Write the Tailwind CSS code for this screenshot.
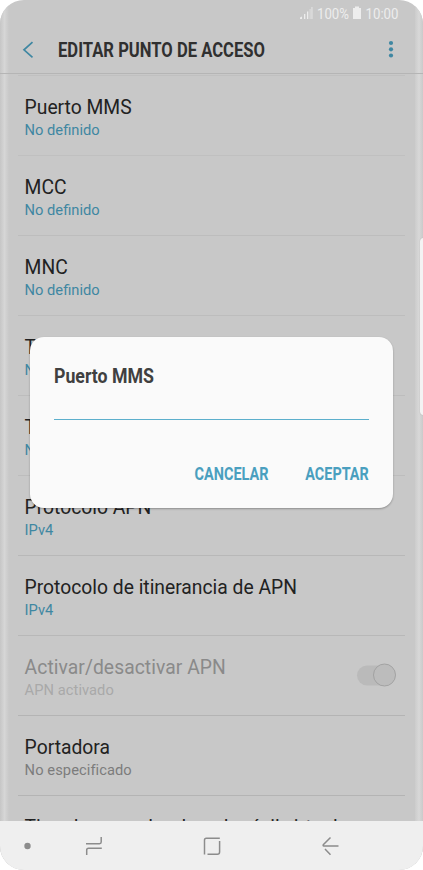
<!DOCTYPE html>
<html lang="es">
<head>
<meta charset="utf-8">
<title>Editar punto de acceso</title>
<script src="https://cdn.jsdelivr.net/npm/@tailwindcss/browser@4"></script>
</head>
<body class="bg-white font-['Roboto',sans-serif]">
<div class="relative flex h-[870px] w-[423px] flex-col overflow-hidden rounded-[24px] bg-[#c8c8c8]">
  <!-- curved screen edges -->
  <div class="absolute inset-y-0 left-0 w-[9px] bg-linear-to-r from-[#c6c6c6] via-[#d6d6d6] to-[#c8c8c8]"></div>
  <div class="absolute inset-y-0 right-0 w-[8px] bg-linear-to-r from-[#cccccc] via-[#d8d8d8] to-[#cacaca]"></div>

  <div class="flex h-[27px] shrink-0 justify-end pr-[22px]">
    <svg class="h-[27px] w-[101px] overflow-visible" viewBox="0 0 101 27" fill="#ededed">
      <path d="M0 19v-1.500l2-1v2.500z"/>
      <path d="M4 14h1.300v5H4zM7 11.500h1.300V19H7z"/>
      <path d="M9.600 9h1v10h-1zM11.300 7h1.300v12h-1.300z" opacity=".65"/>
      <text x="17" y="19" font-size="15.500" textLength="32" lengthAdjust="spacingAndGlyphs">100%</text>
      <path d="M53 8h2V6.500h4V8h2v11h-8z"/>
      <text x="65.500" y="19" font-size="15.500" textLength="33" lengthAdjust="spacingAndGlyphs">10:00</text>
    </svg>
  </div>

  <header class="relative flex h-[47px] shrink-0 items-center border-b border-[#b5b5b5] pl-[22px] pr-[27px]">
    <svg class="h-[20px] w-[12px]" viewBox="0 0 12 20" fill="none" stroke="#3f87a2" stroke-width="1.700"><path d="M10.500 2.200 2 9.800l8.500 7.500"/></svg>
    <svg class="ml-[23px] h-[24px] w-[210px] overflow-visible" viewBox="0 0 210 24"><text x="1" y="19" font-size="19.500" font-weight="700" fill="#303030" textLength="207" lengthAdjust="spacingAndGlyphs">EDITAR PUNTO DE ACCESO</text></svg>
    <svg class="ml-auto h-[20px] w-[10px]" viewBox="0 0 10 20" fill="#3f87a2"><circle cx="5" cy="3" r="2.100"/><circle cx="5" cy="9.300" r="2.100"/><circle cx="5" cy="15.500" r="2.100"/></svg>
  </header>

  <main class="ml-[18px] mr-[18px] h-[747px] shrink-0 overflow-hidden border-t border-transparent text-[19.3px] leading-[24px] text-[#222]">
    <div class="h-[81px] border-y border-[#c0c0c0] pl-[6.600px] pt-[20px]"><p>Puerto MMS</p><p class="text-[14.7px] leading-[20px] text-[#3f87a2]">No definido</p></div>
    <div class="h-[80px] border-b border-[#bdbdbd] pl-[6.600px] pt-[20px]"><p>MCC</p><p class="text-[14.7px] leading-[20px] text-[#3f87a2]">No definido</p></div>
    <div class="h-[80px] border-b border-[#bdbdbd] pl-[6.600px] pt-[20px]"><p>MNC</p><p class="text-[14.7px] leading-[20px] text-[#3f87a2]">No definido</p></div>
    <div class="h-[80px] border-b border-[#bdbdbd] pl-[6.600px] pt-[20px]"><p>Tipo de autenticación</p><p class="text-[14.7px] leading-[20px] text-[#3f87a2]">No definido</p></div>
    <div class="h-[80px] border-b border-[#bdbdbd] pl-[6.600px] pt-[20px]"><p>Tipo de APN</p><p class="text-[14.7px] leading-[20px] text-[#3f87a2]">No definido</p></div>
    <div class="h-[80px] border-b border-[#b8b8b8] pl-[6.600px] pt-[20px]"><p>Protocolo APN</p><p class="text-[14.7px] leading-[20px] text-[#3f87a2]">IPv4</p></div>
    <div class="h-[80px] border-b border-[#b8b8b8] pl-[6.600px] pt-[20px]"><p>Protocolo de itinerancia de APN</p><p class="text-[14.7px] leading-[20px] text-[#3f87a2]">IPv4</p></div>
    <div class="flex h-[80px] justify-between border-b border-[#b4b4b4] pl-[6.600px] pr-[9px] pt-[20px]">
      <div><p class="tracking-[0.06px] text-[#8a8a8a]">Activar/desactivar APN</p><p class="text-[14.7px] leading-[20px] tracking-[0.05px] text-[#a9a9a9]">APN activado</p></div>
      <svg class="mt-[6px] h-[26px] w-[41px]" viewBox="0 0 41 26"><rect x="2" y="3.500" width="38" height="20" rx="10" fill="#bababa"/><circle cx="29.500" cy="13" r="11" fill="#bcbcbc" stroke="#9b9b9b" stroke-width=".8"/></svg>
    </div>
    <div class="h-[80px] border-b border-[#b4b4b4] pl-[6.600px] pt-[20px]"><p>Portadora</p><p class="text-[14.7px] leading-[20px] tracking-[0.07px] text-[#7c7c7c]">No especificado</p></div>
    <div class="whitespace-nowrap pl-[6.600px] pt-[20px]"><p>Tipo de operador de red móvil virtual</p></div>
  </main>

  <nav class="relative h-[49px] shrink-0 bg-[#efefef]">
    <svg class="h-[49px] w-[423px]" viewBox="0 0 423 49" fill="none" stroke="#8c8c8c" stroke-width="1.500">
      <circle cx="27.500" cy="25" r="3.200" fill="#8c8c8c" stroke="none"/>
      <path d="M86 22.700h13.500q1.700 0 1.700-1.700V16M101.800 27.200H88.500q-1.800 0-1.800 1.800v5"/>
      <path d="M204.500 33.500V19q0-1.800 1.800-1.800h13.500M219.600 20V31q0 2.300-2.300 2.300H207.500"/>
      <path d="M338.500 25h-14.500q-1.500-.4-.5-1.500l7-7M325 28l5.500 5.800"/>
    </svg>
  </nav>

  <!-- edge panel handle -->
  <div class="absolute right-[-4px] top-[238px] h-[177px] w-[7px] rounded-[4px] bg-[#f3f3f3] shadow-[0_0_1px_#999]"></div>

  <!-- dialog -->
  <section class="absolute left-[30px] top-[337px] flex h-[171px] w-[363px] flex-col rounded-[14px] bg-[#fafafa] px-[24px] pt-[26px] shadow-[0_1px_2px_rgba(0,0,0,0.3)]">
    <svg class="h-[26px] w-[110px]" viewBox="0 0 110 26"><text x="0" y="20" font-size="20.500" font-weight="700" fill="#404040" textLength="100" lengthAdjust="spacingAndGlyphs">Puerto MMS</text></svg>
    <div class="mt-[30px] h-px bg-[#5cafcc]"></div>
    <div class="mt-[43px] flex justify-between pl-[141px]">
      <svg class="h-[24px] w-[74px] overflow-visible" viewBox="0 0 74 24"><text x="-.5" y="16.700" font-size="17.500" font-weight="700" fill="#4a9fbf" textLength="74" lengthAdjust="spacingAndGlyphs">CANCELAR</text></svg>
      <svg class="h-[24px] w-[64px] overflow-visible" viewBox="0 0 64 24"><text x="0.300" y="16.700" font-size="17.500" font-weight="700" fill="#4a9fbf" textLength="63.500" lengthAdjust="spacingAndGlyphs">ACEPTAR</text></svg>
    </div>
  </section>
</div>
</body>
</html>
